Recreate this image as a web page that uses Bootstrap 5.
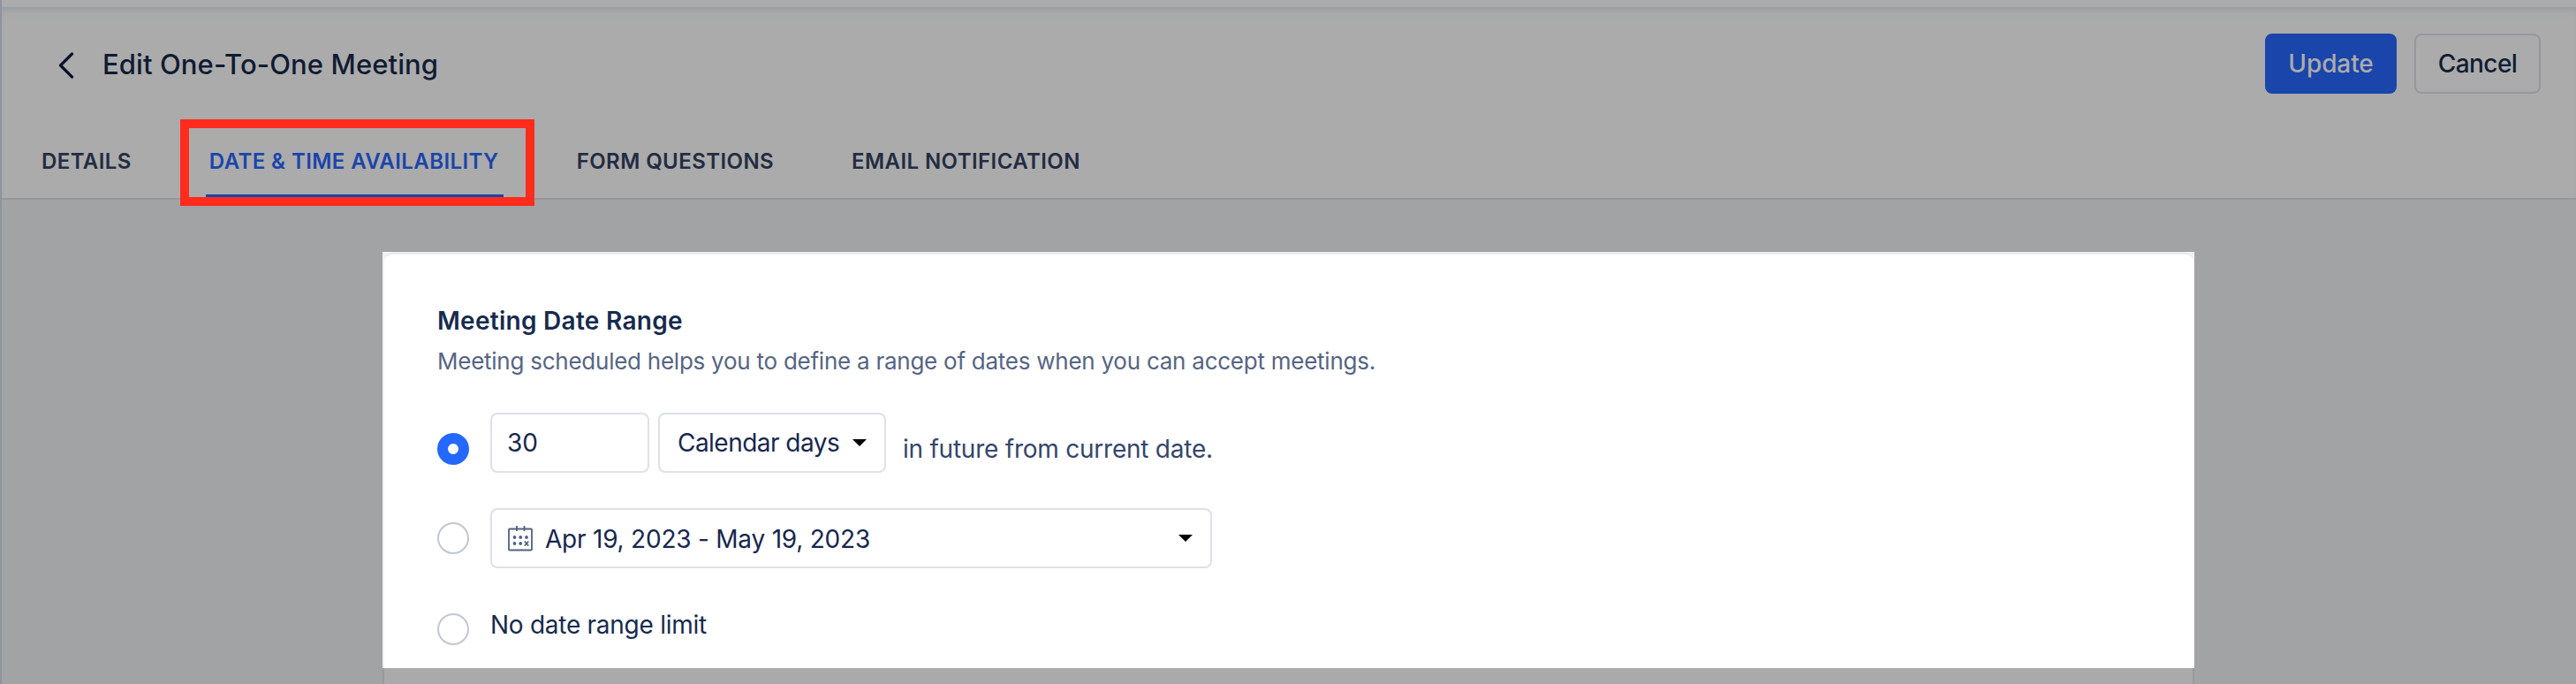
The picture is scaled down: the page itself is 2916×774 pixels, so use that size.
<!DOCTYPE html>
<html lang="en">
<head>
<meta charset="utf-8">
<meta name="viewport" content="width=device-width, initial-scale=1">
<title>Edit One-To-One Meeting</title>
<link href="https://cdn.jsdelivr.net/npm/bootstrap@5.3.0/dist/css/bootstrap.min.css" rel="stylesheet">
<style>
  body { font-family: Inter, "Liberation Sans", sans-serif; font-size: 28px; line-height: 34px; color: #172b4d; background: #a2a3a5; height: 774px; overflow: hidden; }
  .page { height: 774px; border-left: 2px solid #8f939f; }
  .top-strip { height: 8px; background: #ababab; }
  .page-head { background: #ababab; border-bottom: 2px solid #97979c; height: 218px; box-shadow: inset 0 9px 8px -6px #979b9f; }
  .title-row { height: 128px; padding: 0 40px 0 62px; }
  .page-title { font-size: 31px; line-height: 38px; font-weight: 500; letter-spacing: .1px; color: #101b33; margin: 2px 0 0 30px; }
  .title-row svg { margin-top: 3px; }
  .actions { gap: 20px; }
  .action { height: 68px; border-radius: 8px; border: 2px solid #97979c; font-size: 28px; font-weight: 500; line-height: 34px; padding: 0; }
  .action-update { width: 149px; background: #1a45aa; border-color: #1a45aa; color: #ababab; letter-spacing: -.1px; }
  .action-cancel { width: 143px; color: #101d33; letter-spacing: -.55px; }
  .tab-row { height: 88px; padding-left: 45px; }
  .tab-row .nav-link { position: relative; height: 90px; padding: 29px 0 0; font-size: 24px; line-height: 36px; font-weight: 600; letter-spacing: .42px; color: #232c42; white-space: nowrap; }
  .tab-row .nav-link + .nav-link { margin-left: 88px; }
  .tab-row .nav-link.active { color: #1a45aa; }
  .tab-row .nav-link.active::before { content: ""; position: absolute; left: -4px; right: -5px; bottom: 0; height: 6px; background: #1a45aa; }
  .highlight { position: absolute; left: -33px; right: -40px; top: -1px; height: 98px; border: 10px solid #ff2b1d; }
  .panel { width: 2051px; margin: 59px 0 0 431px; }
  .panel-lit { height: 471px; background: #f3f3f7; }
  .panel-body { height: 471px; background: #fff; margin: 0 1px 0 2px; border-top: 3px solid #ebebf0; border-radius: 10px 10px 0 0; padding: 58px 60px 0; }
  .panel-dim { height: 18px; background: #aaa; border: solid #98999c; border-width: 0 2px; }
  .heading { font-size: 28px; line-height: 34px; font-weight: 600; letter-spacing: .28px; margin: 0; }
  .hint { font-size: 26px; line-height: 32px; letter-spacing: -.25px; color: #566583; margin: 13px 0 42px; }
  .dot { width: 36px; height: 36px; border-radius: 50%; border: 2px solid #c1c7d3; flex: none; margin-right: 24px; }
  .dot-on { border: 12px solid #2468ff; margin-top: 14px; }
  .field { height: 68px; border: 2px solid #dfe0e8; border-radius: 8px; color: #172750; white-space: nowrap; }
  .field-num { width: 180px; padding-left: 17px; }
  .field-unit { width: 258px; margin-left: 10px; padding: 0 20px; letter-spacing: -.53px; }
  .field-range { width: 817px; padding: 0 20px 0 17px; letter-spacing: -.22px; }
  .field-range span { margin-left: 13px; padding-top: 2px; }
  .after-text { margin: 14px 0 0 19px; color: #35466b; letter-spacing: -.235px; }
  .option-range { margin-top: 40px; }
  .option-none { margin-top: 51px; height: 36px; }
  .none-text { margin-top: -10px; letter-spacing: -.265px; }
</style>
</head>
<body>
<div class="page">
  <div class="top-strip"></div>
  <header class="page-head">
    <div class="title-row d-flex align-items-center">
      <svg width="22" height="30" viewBox="0 0 22 30" fill="none" stroke="#06122c" stroke-width="3.2" stroke-linecap="round" stroke-linejoin="round"><path d="M17.500 2 4.500 15 17.500 28"/></svg>
      <h1 class="page-title">Edit One-To-One Meeting</h1>
      <div class="actions d-flex ms-auto">
        <button class="btn action action-update">Update</button>
        <button class="btn action action-cancel">Cancel</button>
      </div>
    </div>
    <nav class="nav tab-row flex-nowrap">
      <a class="nav-link">DETAILS</a>
      <a class="nav-link active">DATE &amp; TIME AVAILABILITY<span class="highlight"></span></a>
      <a class="nav-link">FORM QUESTIONS</a>
      <a class="nav-link">EMAIL NOTIFICATION</a>
    </nav>
  </header>
  <main class="panel">
    <div class="panel-lit">
      <div class="panel-body">
        <h2 class="heading">Meeting Date Range</h2>
        <p class="hint">Meeting scheduled helps you to define a range of dates when you can accept meetings.</p>
        <div class="d-flex align-items-center">
          <span class="dot dot-on"></span>
          <div class="field field-num d-flex align-items-center">30</div>
          <div class="field field-unit d-flex align-items-center justify-content-between">Calendar days
            <svg width="16" height="8" viewBox="0 0 16 8"><path d="M0 0h16L8 8z"/></svg>
          </div>
          <span class="after-text">in future from current date.</span>
        </div>
        <div class="option-range d-flex align-items-center">
          <span class="dot"></span>
          <div class="field field-range d-flex align-items-center">
            <svg width="30" height="30" viewBox="0 0 30 30" fill="none" stroke="#53617f" stroke-width="1.8"><rect x="2" y="4.500" width="26" height="24" rx="1"/><path d="M11 1v6M19.500 1v6"/><g fill="#53617f" stroke="none"><circle cx="8.500" cy="14" r="1.900"/><circle cx="15.200" cy="14" r="1.900"/><circle cx="22" cy="14" r="1.900"/><circle cx="8.500" cy="21" r="1.900"/><circle cx="15.200" cy="21" r="1.900"/></g><path d="m19.800 18.500 4.500 5m0-5-4.500 5"/></svg>
            <span>Apr 19, 2023 - May 19, 2023</span>
            <svg class="ms-auto" width="16" height="8" viewBox="0 0 16 8"><path d="M0 0h16L8 8z"/></svg>
          </div>
        </div>
        <div class="option-none d-flex align-items-center">
          <span class="dot"></span>
          <span class="none-text">No date range limit</span>
        </div>
      </div>
    </div>
    <div class="panel-dim"></div>
  </main>
</div>
<script src="https://cdn.jsdelivr.net/npm/bootstrap@5.3.0/dist/js/bootstrap.bundle.min.js"></script>
</body>
</html>
